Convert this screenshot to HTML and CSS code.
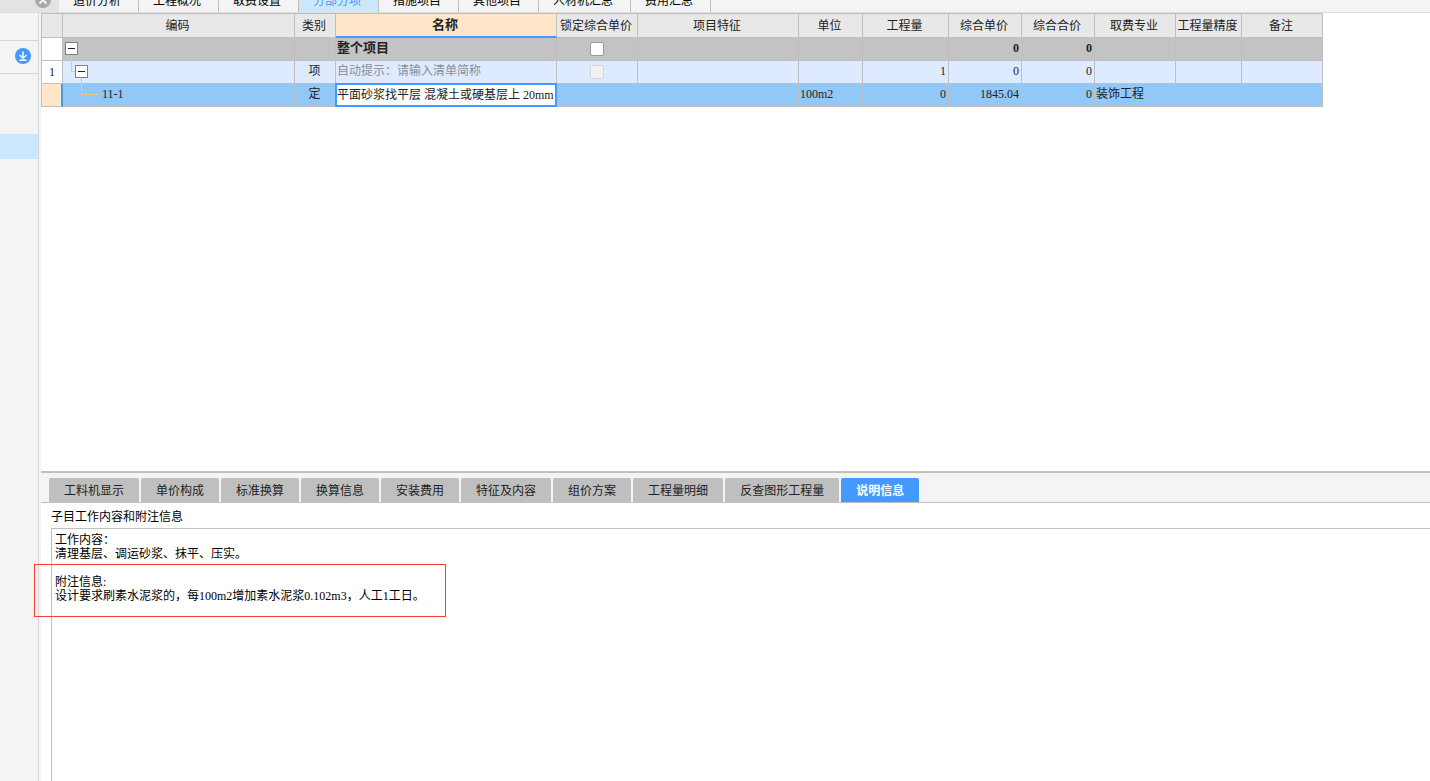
FILE: index.html
```html
<!DOCTYPE html>
<html lang="zh-CN">
<head>
<meta charset="utf-8">
<title>分部分项</title>
<link rel="stylesheet" href="styles.css">
</head>
<body>
<div class="app">
  <header class="topbar">
    <div class="topbar-left">
      <button class="close" type="button" aria-label="关闭">
        <svg width="16" height="16" viewBox="0 0 16 16"><circle cx="8" cy="8" r="8" fill="#a9a9a9"/><path d="M4.500 4.500L11.500 11.500M11.500 4.500L4.500 11.500" stroke="#fff" stroke-width="1.800"/></svg>
      </button>
    </div>
    <nav class="top-tabs">
      <button type="button">造价分析</button>
      <button type="button">工程概况</button>
      <button type="button">取费设置</button>
      <button type="button" class="active">分部分项</button>
      <button type="button">措施项目</button>
      <button type="button">其他项目</button>
      <button type="button">人材机汇总</button>
      <button type="button">费用汇总</button>
    </nav>
  </header>
  <div class="body">
    <aside class="sidebar">
      <div class="side-head"></div>
      <div class="side-tool">
        <button type="button" aria-label="展开">
          <svg width="16" height="16" viewBox="0 0 16 16"><circle cx="8" cy="8" r="8" fill="#4499ff"/><path d="M8 3.500V10M4.500 7L8 10.300L11.500 7M4.500 12.300H11.500" fill="none" stroke="#fff" stroke-width="1.400"/></svg>
        </button>
      </div>
      <div class="side-list"><div class="side-item"></div></div>
    </aside>
    <main class="main">
      <section class="grid-area">
        <table class="grid">
          <colgroup>
            <col class="c-no"><col class="c-code"><col class="c-type"><col class="c-name"><col class="c-lock"><col class="c-feat"><col class="c-unit"><col class="c-qty"><col class="c-price"><col class="c-price"><col class="c-major"><col class="c-prec"><col class="c-note">
          </colgroup>
          <thead>
            <tr><th></th><th>编码</th><th>类别</th><th class="current">名称</th><th>锁定综合单价</th><th>项目特征</th><th>单位</th><th>工程量</th><th>综合单价</th><th>综合合价</th><th>取费专业</th><th>工程量精度</th><th>备注</th></tr>
          </thead>
          <tbody>
            <tr class="total">
              <td class="no"></td>
              <td class="code"><svg class="guide" width="40" height="23" viewBox="0 0 40 23"><path d="M8.500 17V23"/></svg><button class="toggle" type="button" aria-label="折叠整个项目"></button></td>
              <td></td><td>整个项目</td>
              <td class="mid"><input type="checkbox" aria-label="锁定整个项目"></td>
              <td></td><td></td><td></td><td class="num">0</td><td class="num">0</td><td></td><td></td><td></td>
            </tr>
            <tr class="item">
              <td class="no">1</td>
              <td class="code"><svg class="guide" width="40" height="23" viewBox="0 0 40 23"><path d="M8.500 0V10.500H12M18.500 17V23"/></svg><button class="toggle nested" type="button" aria-label="折叠清单"></button></td>
              <td class="mid">项</td><td class="hint">自动提示：请输入清单简称</td>
              <td class="mid"><input type="checkbox" disabled aria-label="锁定清单"></td>
              <td></td><td></td><td class="num">1</td><td class="num">0</td><td class="num">0</td><td></td><td></td><td></td>
            </tr>
            <tr class="selected">
              <td class="no"></td>
              <td class="code"><svg class="guide" width="40" height="23" viewBox="0 0 40 23"><path d="M18.500 0V10.500H35"/></svg><span class="leaf">11-1</span></td>
              <td class="mid">定</td>
              <td class="editing"><input type="text" aria-label="名称" value="平面砂浆找平层 混凝土或硬基层上 20mm"></td>
              <td></td><td></td><td>100m2</td><td class="num">0</td><td class="num">1845.04</td><td class="num">0</td><td>装饰工程</td><td></td><td></td>
            </tr>
          </tbody>
        </table>
      </section>
      <section class="detail">
        <nav class="detail-tabs">
          <button type="button">工料机显示</button>
          <button type="button">单价构成</button>
          <button type="button">标准换算</button>
          <button type="button">换算信息</button>
          <button type="button">安装费用</button>
          <button type="button">特征及内容</button>
          <button type="button">组价方案</button>
          <button type="button">工程量明细</button>
          <button type="button">反查图形工程量</button>
          <button type="button" class="active">说明信息</button>
        </nav>
        <label class="detail-title" for="info">子目工作内容和附注信息</label>
        <textarea class="info" id="info" readonly>工作内容：
清理基层、调运砂浆、抹平、压实。

附注信息:
设计要求刷素水泥浆的，每100m2增加素水泥浆0.102m3，人工1工日。</textarea>
        <div class="mark"></div>
      </section>
    </main>
  </div>
</div>
</body>
</html>
```
FILE: styles.css
```css
* { box-sizing: border-box; }

body {
  margin: 0;
  font: 12px/16px "Liberation Serif", "Noto Sans CJK SC", sans-serif;
  color: #222;
  background: #fff;
}

button, input, textarea { font: inherit; color: inherit; }
button { border: 0; padding: 0; background: none; }
svg { display: block; }

.app {
  display: flex;
  flex-direction: column;
  height: 100vh;
  overflow: hidden;
}

/* top tab strip, scrolled partly out of view */
.topbar {
  display: flex;
  align-items: flex-end;
  height: 13px;
  overflow: hidden;
  background: #f4f4f4;
  border-bottom: 1px solid #dcdcdc;
}
.topbar-left {
  display: flex;
  justify-content: flex-end;
  align-items: center;
  width: 59px;
  height: 25px;
  padding-right: 8px;
  background: #e3e3e3;
}
.top-tabs { display: flex; }
.top-tabs button {
  height: 25px;
  padding: 2px 17px 0 14px;
  border-right: 1px solid #bfbfbf;
  color: #000;
}
.top-tabs .active { background: #cce8ff; color: #4499ff; }

.body { display: flex; flex: 1; min-height: 0; }

.sidebar {
  flex: none;
  width: 39px;
  background: #f4f4f4;
  border-right: 1px solid #d6d6d6;
}
.side-head { height: 28px; border-bottom: 1px solid #d6d6d6; }
.side-tool {
  display: flex;
  align-items: center;
  justify-content: flex-end;
  height: 33px;
  padding: 0 7px 2px 0;
  border-bottom: 1px solid #d6d6d6;
}
.side-list { padding-top: 60px; }
.side-item { height: 25px; background: #cce8ff; }

.main {
  display: grid;
  grid-template-rows: 458fr 310fr;
  flex: 1;
  min-width: 0;
  border-left: 2px solid #f4f4f4;
}
.grid-area { overflow: hidden; }

.grid {
  width: 1282px;
  table-layout: fixed;
  border-collapse: separate;
  border-spacing: 0;
  border-top: 1px solid #bfbfbf;
  border-left: 1px solid #bfbfbf;
}
.c-no { width: 21px; }
.c-code { width: 232px; }
.c-type { width: 41px; }
.c-name { width: 221px; }
.c-lock { width: 81px; }
.c-feat { width: 161px; }
.c-unit { width: 64px; }
.c-qty { width: 86px; }
.c-price { width: 73px; }
.c-major { width: 81px; }
.c-prec { width: 66px; }
.c-note { width: 81px; }

.grid th, .grid td {
  border-right: 1px solid #bfbfbf;
  border-bottom: 1px solid #bfbfbf;
  white-space: nowrap;
}
.grid th {
  height: 24px;
  padding: 0 2px 0 0;
  background: #e8e8e8;
  font-weight: normal;
}
.grid th.current {
  background: #ffe6c8;
  border-bottom: 2px solid #4499ff;
  font-size: 13px;
  font-weight: bold;
}
.grid td { height: 23px; padding: 0 2px 2px 1px; }
.grid td.no { padding: 0; text-align: center; background: #fff; }
.grid td.mid { text-align: center; }
.grid td.num { text-align: right; }
.grid td.hint { color: #8a8f99; }

.total td { background: #c3c3c3; font-weight: bold; }
.total td:nth-child(4) { font-size: 13px; }
.item td { background: #deeaff; }
.selected td { background: #92c8f8; }
.grid .selected .no { background: #ffe6c8; border-right: 2px solid #4499ff; }

.code { position: relative; }
.guide {
  position: absolute;
  top: 0;
  left: 0;
  fill: none;
  stroke: #f7c47c;
}
.toggle {
  display: block;
  position: relative;
  width: 13px;
  height: 13px;
  margin-left: 1px;
  border: 1px solid #808080;
  background: linear-gradient(#222, #222) center / 7px 1px no-repeat #fff;
}
.toggle.nested { margin-left: 11px; }
.leaf { padding-left: 38px; }

.grid input[type="checkbox"] {
  appearance: none;
  display: block;
  width: 14px;
  height: 14px;
  margin: 1px auto 0;
  border: 1px solid #999;
  border-radius: 2px;
  background: #fff;
}
.grid input[type="checkbox"]:disabled { border-color: #d6d6d6; background: #f2f2f2; }

.grid td.editing { padding: 0; }
.editing input {
  display: block;
  position: relative;
  width: calc(100% + 2px);
  height: 24px;
  margin: -1px;
  padding: 0 0 2px;
  border: 2px solid #4499ff;
  border-radius: 0;
  background: #fff;
  outline: 0;
}

.detail {
  position: relative;
  display: flex;
  flex-direction: column;
  min-width: 0;
  border-top: 2px solid #bfbfbf;
}
.detail-tabs {
  display: flex;
  gap: 2px;
  padding: 5px 8px 0;
  background: #f4f4f4;
  border-bottom: 1px solid #bfbfbf;
}
.detail-tabs button {
  height: 24px;
  padding: 2px 15px 0;
  border-radius: 2px 2px 0 0;
  background: #bfbfbf;
}
.detail-tabs .active { background: #4499ff; color: #fff; font-weight: bold; }
.detail-title { padding: 6px 10px 3px; color: #000; }
.info {
  flex: 1;
  margin: 0 0 0 10px;
  padding: 4px 3px;
  border: solid #bfbfbf;
  border-width: 1px 0 0 1px;
  border-radius: 0;
  background: #fff;
  color: #000;
  line-height: 14px;
  resize: none;
  outline: 0;
}

/* red annotation frame over the note text */
.mark {
  position: absolute;
  top: 91px;
  left: -7px;
  width: 412px;
  height: 53px;
  border: 1px solid #fa3c37;
  pointer-events: none;
}
```
